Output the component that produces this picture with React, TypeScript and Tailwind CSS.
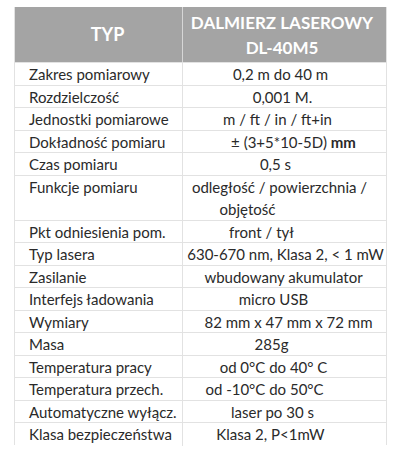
const rows: { k: string; v: React.ReactNode; s?: string; tall?: boolean }[] = [
  { k: "Zakres pomiarowy", v: "0,2 m do 40 m", s: "pr-[8px]" },
  { k: "Rozdzielczość", v: "0,001 M.", s: "pr-[4px]" },
  { k: "Jednostki pomiarowe", v: "m / ft / in / ft+in", s: "pr-[14px]" },
  {
    k: "Dokładność pomiaru",
    v: (
      <>
        ± (3+5*10-5D) <b className="font-bold">mm</b>
      </>
    ),
    s: "pl-[18px]",
  },
  { k: "Czas pomiaru", v: "0,5 s", s: "pr-[18px]" },
  {
    k: "Funkcje pomiaru",
    v: (
      <>
        odległość / powierzchnia /
        <br />
        <span className="pr-[64px]">objętość</span>
      </>
    ),
    s: "pr-[10px]",
    tall: true,
  },
  { k: "Pkt odniesienia pom.", v: "front / tył", s: "pr-[46px]" },
  { k: "Typ lasera", v: "630-670 nm, Klasa 2, < 1 mW", s: "pl-[2px]" },
  { k: "Zasilanie", v: "wbudowany akumulator", s: "pr-[2px]" },
  { k: "Interfejs ładowania", v: "micro USB", s: "pr-[22px]" },
  { k: "Wymiary", v: "82 mm x 47 mm x 72 mm", s: "pl-[8px]" },
  { k: "Masa", v: "285g", s: "pr-[26px]" },
  { k: "Temperatura pracy", v: "od 0°C do 40° C", s: "pr-[22px]" },
  { k: "Temperatura przech.", v: "od -10°C do 50°C", s: "pr-[40px]" },
  { k: "Automatyczne wyłącz.", v: "laser po 30 s", s: "pr-[24px]" },
  { k: "Klasa bezpieczeństwa", v: "Klasa 2, P<1mW", s: "pr-[28px]" },
];

export default function App() {
  return (
    <div className="w-[408px] h-[450px] bg-white pt-[7px] pl-[14px] overflow-hidden font-['Lato','Liberation_Sans',sans-serif]">
      <div className="w-[373px] border-x border-[#e2e2e2]">
        <div className="grid grid-cols-[168px_1fr] h-[55px] bg-[#a4a4a4] text-white font-bold">
          <div className="flex items-center justify-center pl-[18px] text-[18px] border-r border-[#d6d6d6]">TYP</div>
          <div className="flex flex-col items-center justify-center pr-[5px] text-[17px] leading-[25px]">
            <span>DALMIERZ LASEROWY</span>
            <span>DL-40M5</span>
          </div>
        </div>
        {rows.map((r) => (
          <div
            key={r.k}
            className={`grid grid-cols-[168px_1fr] border-t border-[#e2e2e2] text-[15px] leading-[22.5px] text-[#2a2a2a] ${r.tall ? "h-[45px]" : "h-[22.5px]"}`}
          >
            <div className="pl-[14px] border-r border-[#e2e2e2] whitespace-nowrap">{r.k}</div>
            <div className={`text-center whitespace-nowrap ${r.s ?? ""}`}>{r.v}</div>
          </div>
        ))}
      </div>
    </div>
  );
}
